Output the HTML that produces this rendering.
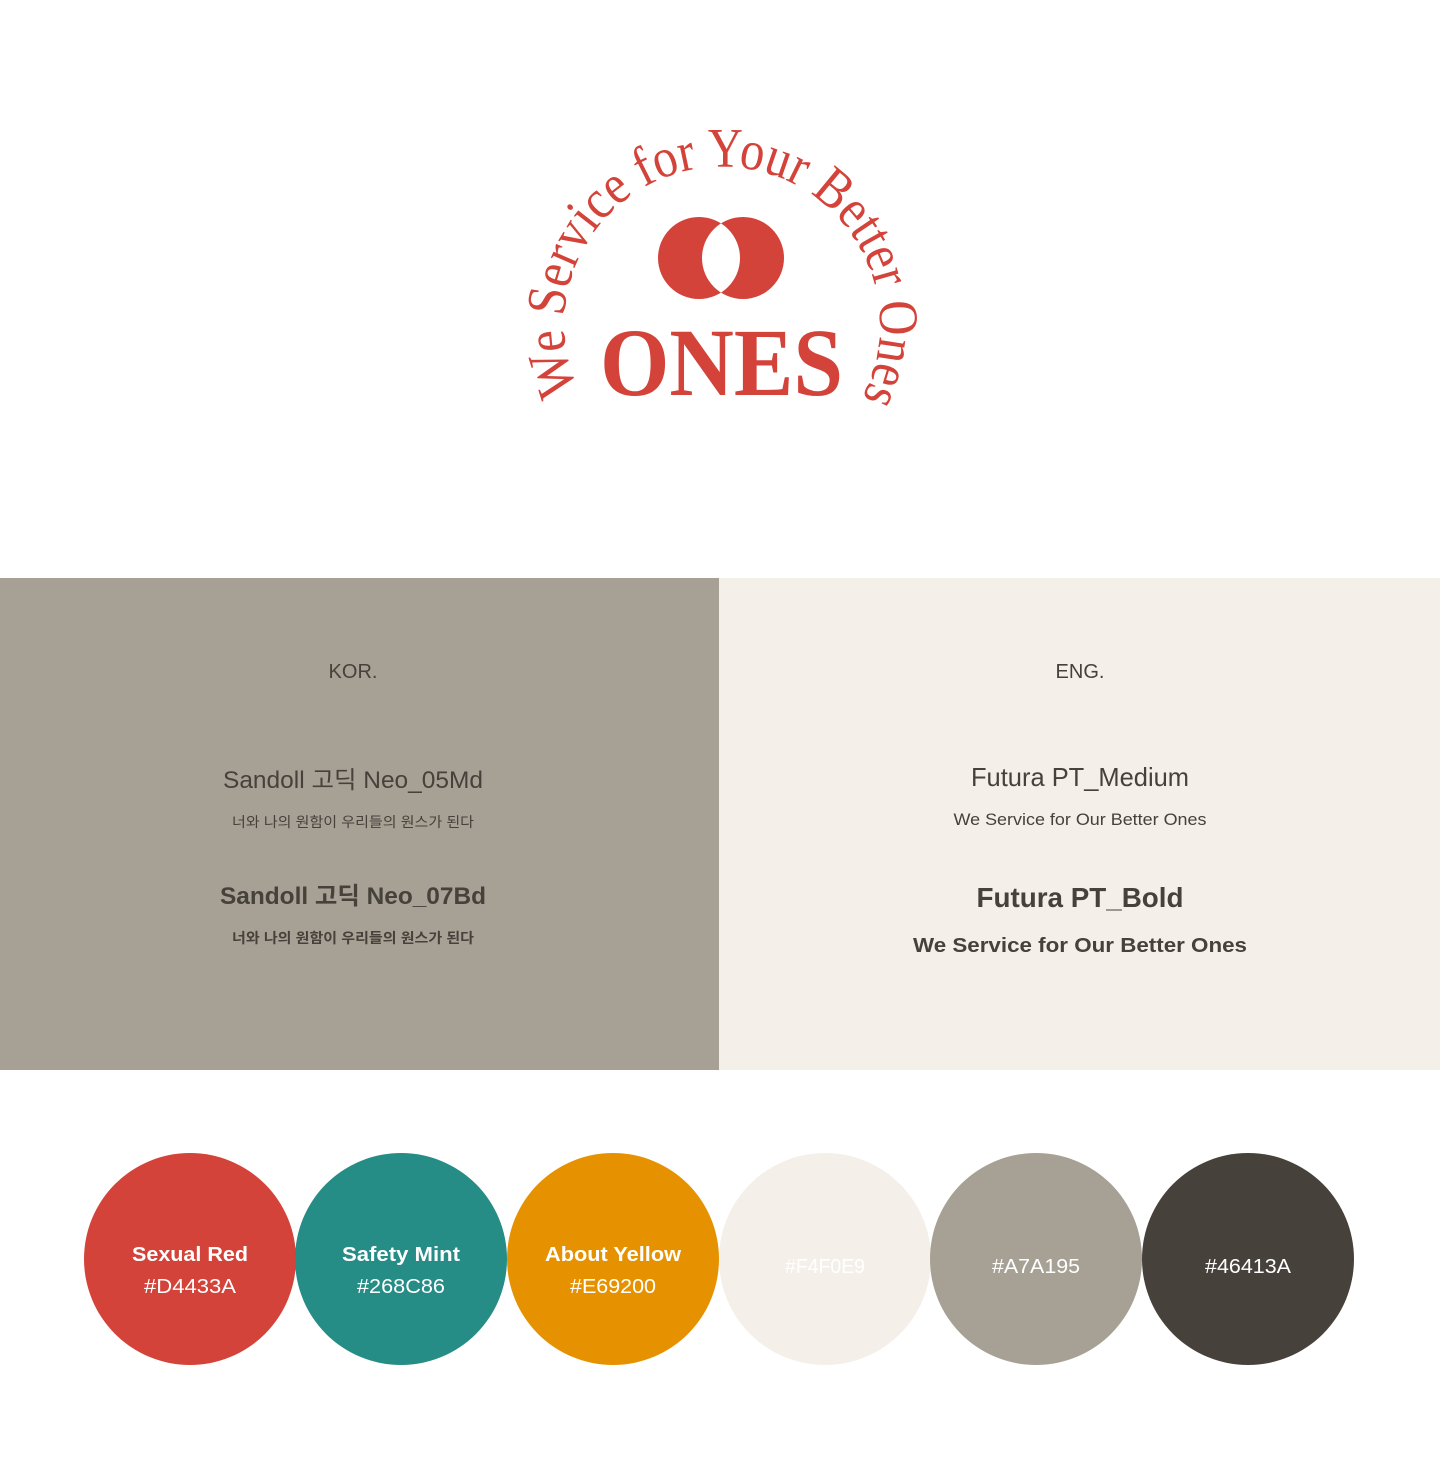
<!DOCTYPE html>
<html><head><meta charset="utf-8"><style>
html,body{margin:0;padding:0;background:#fff}
svg{display:block}
</style></head><body>
<svg width="1440" height="1468" viewBox="0 0 1440 1468" xmlns="http://www.w3.org/2000/svg">
<rect width="1440" height="1468" fill="#fff"/>
<defs>
<path id="arc" d="M580,394 A158,158 0 1 1 864,394"/>
</defs>
<text font-family="Liberation Serif, serif" font-size="56" fill="#D4433A"><textPath href="#arc" startOffset="4" textLength="640" lengthAdjust="spacingAndGlyphs">We Service for Your Better Ones</textPath></text>
<path fill="#D4433A" fill-rule="evenodd" d="M658,258 a41,41 0 1,0 82,0 a41,41 0 1,0 -82,0 Z M702,258 a41,41 0 1,0 82,0 a41,41 0 1,0 -82,0 Z"/>
<text x="600" y="395" font-family="Liberation Serif, serif" font-weight="bold" font-size="96" fill="#D4433A" textLength="243" lengthAdjust="spacingAndGlyphs">ONES</text>

<rect x="0" y="578" width="719" height="492" fill="#A7A195"/>
<rect x="719" y="578" width="721" height="492" fill="#F4F0E9"/>
<g fill="#46413A" text-anchor="middle" font-family="Liberation Sans, 'Noto Sans CJK KR', sans-serif">
<text x="353" y="678" font-size="20">KOR.</text>
<text x="353" y="788" font-size="24" textLength="260" lengthAdjust="spacingAndGlyphs">Sandoll 고딕 Neo_05Md</text>
<text x="353" y="827" font-size="14" textLength="242" lengthAdjust="spacingAndGlyphs">너와 나의 원함이 우리들의 원스가 된다</text>
<text x="353" y="904" font-size="24" font-weight="bold" textLength="266" lengthAdjust="spacingAndGlyphs">Sandoll 고딕 Neo_07Bd</text>
<text x="353" y="943" font-size="14" font-weight="bold" textLength="242" lengthAdjust="spacingAndGlyphs">너와 나의 원함이 우리들의 원스가 된다</text>
<text x="1080" y="678" font-size="20">ENG.</text>
<text x="1080" y="786" font-size="26" textLength="218" lengthAdjust="spacingAndGlyphs">Futura PT_Medium</text>
<text x="1080" y="825" font-size="17" textLength="253" lengthAdjust="spacingAndGlyphs">We Service for Our Better Ones</text>
<text x="1080" y="907" font-size="28" font-weight="bold" textLength="207" lengthAdjust="spacingAndGlyphs">Futura PT_Bold</text>
<text x="1080" y="952" font-size="20" font-weight="bold" textLength="334" lengthAdjust="spacingAndGlyphs">We Service for Our Better Ones</text>
</g>

<circle cx="190" cy="1259" r="106" fill="#D4433A"/>
<circle cx="401" cy="1259" r="106" fill="#268C86"/>
<circle cx="613" cy="1259" r="106" fill="#E69200"/>
<circle cx="825" cy="1259" r="106" fill="#F4F0E9"/>
<circle cx="1036" cy="1259" r="106" fill="#A7A195"/>
<circle cx="1248" cy="1259" r="106" fill="#46413A"/>
<g fill="#fff" text-anchor="middle" font-family="Liberation Sans, sans-serif" font-size="20">
<text x="190" y="1261" font-weight="bold" textLength="116" lengthAdjust="spacingAndGlyphs">Sexual Red</text>
<text x="190" y="1293" textLength="92" lengthAdjust="spacingAndGlyphs">#D4433A</text>
<text x="401" y="1261" font-weight="bold" textLength="118" lengthAdjust="spacingAndGlyphs">Safety Mint</text>
<text x="401" y="1293" textLength="88" lengthAdjust="spacingAndGlyphs">#268C86</text>
<text x="613" y="1261" font-weight="bold" textLength="136" lengthAdjust="spacingAndGlyphs">About Yellow</text>
<text x="613" y="1293" textLength="86" lengthAdjust="spacingAndGlyphs">#E69200</text>
<text x="825" y="1273" textLength="80" lengthAdjust="spacingAndGlyphs">#F4F0E9</text>
<text x="1036" y="1273" textLength="88" lengthAdjust="spacingAndGlyphs">#A7A195</text>
<text x="1248" y="1273" textLength="86" lengthAdjust="spacingAndGlyphs">#46413A</text>
</g>
</svg>
</body></html>
